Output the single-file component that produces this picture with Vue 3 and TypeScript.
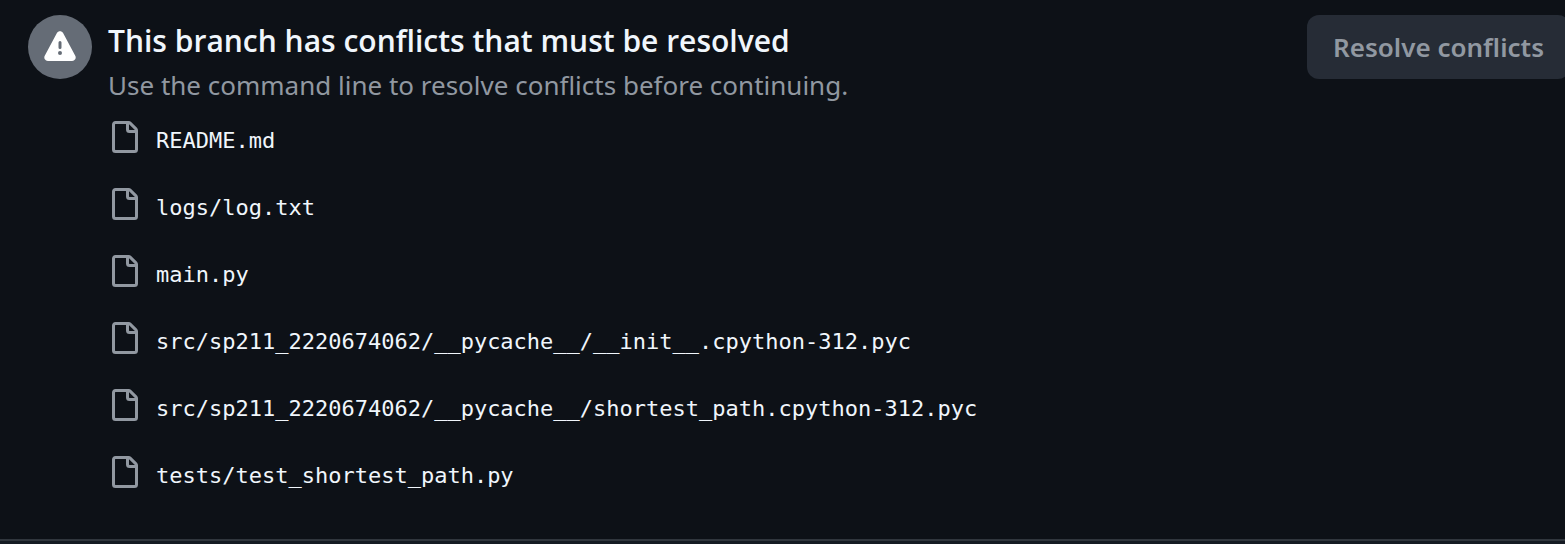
<script setup lang="ts">
const files: string[] = [
  'README.md',
  'logs/log.txt',
  'main.py',
  'src/sp211_2220674062/__pycache__/__init__.cpython-312.pyc',
  'src/sp211_2220674062/__pycache__/shortest_path.cpython-312.pyc',
  'tests/test_shortest_path.py',
]
</script>

<template>
  <main class="merge-box">
    <section class="status">
      <span class="badge">
        <svg class="icon" viewBox="0 0 16 16" aria-hidden="true">
          <path d="M6.457 1.047c.659-1.234 2.427-1.234 3.086 0l6.082 11.378A1.75 1.75 0 0 1 14.082 15H1.918a1.75 1.75 0 0 1-1.543-2.575ZM8 5a.75.75 0 0 0-.75.75v2.5a.75.75 0 0 0 1.5 0v-2.5A.75.75 0 0 0 8 5Zm1 6a1 1 0 1 0-2 0 1 1 0 0 0 2 0Z" />
        </svg>
      </span>
      <div class="details">
        <h3 class="title">This branch has conflicts that must be resolved</h3>
        <p class="hint">Use the command line to resolve conflicts before continuing.</p>
        <ul class="files">
          <li v-for="file in files" :key="file" class="file">
            <svg class="icon" viewBox="0 0 16 16" aria-hidden="true">
              <path d="M2 1.75C2 .784 2.784 0 3.75 0h6.586c.464 0 .909.184 1.237.513l2.914 2.914c.329.328.513.773.513 1.237v9.586A1.75 1.75 0 0 1 13.25 16h-9.5A1.75 1.75 0 0 1 2 14.25Zm1.75-.25a.25.25 0 0 0-.25.25v12.5c0 .138.112.25.25.25h9.5a.25.25 0 0 0 .25-.25V6h-2.75A1.75 1.75 0 0 1 9 4.25V1.5Zm6.75.062V4.25c0 .138.112.25.25.25h2.688l-.011-.013-2.914-2.914-.013-.011Z" />
            </svg>
            <code class="name">{{ file }}</code>
          </li>
        </ul>
      </div>
      <button class="resolve" type="button" disabled>Resolve conflicts</button>
    </section>
    <footer class="footer"></footer>
  </main>
</template>

<style>
body {
  margin: 0;
  background: #0d1117;
}
</style>

<style scoped>
.merge-box {
  overflow: hidden;
  background: #0d1117;
  color: #f0f6fc;
  font-family: "Segoe UI", "Noto Sans", "Open Sans", sans-serif;
}

.status {
  display: flex;
  align-items: flex-start;
  gap: 16px;
  padding: 15px 0 34px 28px;
}

.badge {
  display: flex;
  flex: none;
  align-items: center;
  justify-content: center;
  width: 64px;
  height: 64px;
  border-radius: 50%;
  background: #656c76;
  color: #ffffff;
}

.icon {
  display: block;
  flex: none;
  width: 32px;
  height: 32px;
  fill: currentColor;
}

.details {
  flex: 1;
  min-width: 0;
}

.title,
.hint {
  margin: 0;
  white-space: nowrap;
}

.title {
  font-family: "Segoe UI", "Open Sans", sans-serif;
  font-size: 30px;
  font-weight: 600;
  line-height: 52px;
}

.hint {
  color: #9198a1;
  font-size: 26px;
  line-height: 36px;
}

.files {
  margin: 0;
  padding: 0;
  list-style: none;
}

.file {
  display: flex;
  align-items: center;
  gap: 16px;
  height: 67px;
  color: #9198a1;
}

.name {
  padding-top: 8px;
  color: #f0f6fc;
  font-family: "DejaVu Sans Mono", monospace;
  font-size: 22px;
  line-height: 32px;
  white-space: nowrap;
}

.resolve {
  flex: none;
  height: 64px;
  margin-right: -5px;
  padding: 0 26px;
  border: 0;
  border-radius: 12px;
  background: #262c36;
  color: #9198a1;
  font-family: inherit;
  font-size: 26px;
  font-weight: 600;
  line-height: 64px;
}

.footer {
  height: 3px;
  border-top: 2px solid #30363d;
  background: #151b23;
}
</style>
